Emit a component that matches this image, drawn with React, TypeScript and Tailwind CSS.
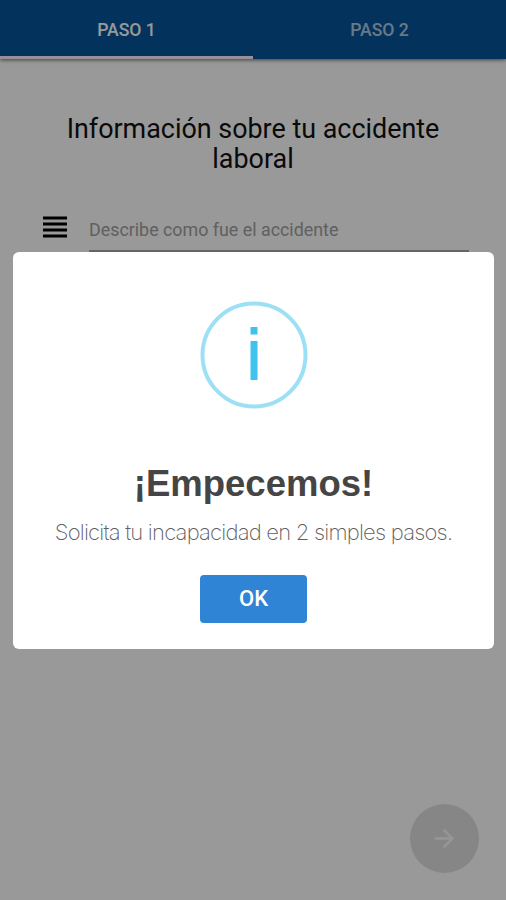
import React from 'react';
import { MdArrowForward, MdViewHeadline } from 'react-icons/md';

const tabs = [
  { label: 'PASO 1', active: true },
  { label: 'PASO 2', active: false },
];

const TabBar: React.FC = () => (
  <header className="flex h-[59px] bg-[#05559b] shadow-[0_1px_4px_rgba(0,0,0,0.6)]">
    {tabs.map(tab => (
      <button
        key={tab.label}
        className={`flex-1 border-b-[3px] pt-[4px] text-[17.6px] leading-[52px] font-medium font-[Roboto,sans-serif] ${
          tab.active ? 'border-[#fdf1ff] text-white' : 'border-transparent text-white/70'
        }`}
      >
        {tab.label}
      </button>
    ))}
  </header>
);

const InfoIcon: React.FC = () => (
  <svg className="h-[108px] w-[108px]" viewBox="0 0 108 108" fill="none">
    <circle cx="54" cy="54" r="51.5" stroke="#9de0f6" strokeWidth="4" />
    <path d="M50.5 26h7v7.5h-7zM50.5 40h7v39h-7z" fill="#3fc3ee" />
  </svg>
);

const WelcomeDialog: React.FC = () => (
  <div className="fixed inset-0 flex items-center justify-center bg-black/40 pl-px">
    <div className="flex h-[397px] w-[481px] flex-col items-center rounded-[6px] bg-white pt-[49px]">
      <InfoIcon />
      <h2 className="mt-[53px] text-[36.5px] leading-[44px] font-bold text-[#454545] font-['Liberation_Sans',Arial,sans-serif]">
        ¡Empecemos!
      </h2>
      <p className="mt-[12px] text-[22px] leading-[28px] font-extralight tracking-[-0.79px] whitespace-nowrap text-[#606060] font-[Inter,sans-serif]">
        Solicita tu incapacidad en 2 simples pasos.
      </p>
      <button className="mt-[29px] h-[48px] w-[107px] rounded-[4px] bg-[#2f84d6] text-[22px] font-medium text-white font-[Roboto,sans-serif]">
        OK
      </button>
    </div>
  </div>
);

function App() {
  return (
    <div className="flex h-[900px] w-full flex-col bg-white">
      <TabBar />
      <main className="flex flex-1 flex-col pt-[55px]">
        <h1 className="px-10 text-center text-[26.9px] leading-[30px] text-[#111] font-[Roboto,sans-serif]">
          Información sobre tu accidente laboral
        </h1>
        <div className="mt-[35px] mr-[37px] ml-[37px] flex">
          <MdViewHeadline className="h-[36px] w-[36px] text-black" />
          <div className="ml-[16px] h-[43px] flex-1 border-b-2 border-[#a8a8a8] text-[17.85px] leading-[41px] text-[#a0a0a0] font-[Roboto,sans-serif]">
            Describe como fue el accidente
          </div>
        </div>
        <button className="mt-auto mr-[27px] mb-[27px] flex h-[69px] w-[69px] items-center justify-center self-end rounded-full bg-[#e0e0e0]">
          <MdArrowForward className="h-[29px] w-[29px] text-[#fafafa]" />
        </button>
      </main>
      <WelcomeDialog />
    </div>
  );
}

export default App;
